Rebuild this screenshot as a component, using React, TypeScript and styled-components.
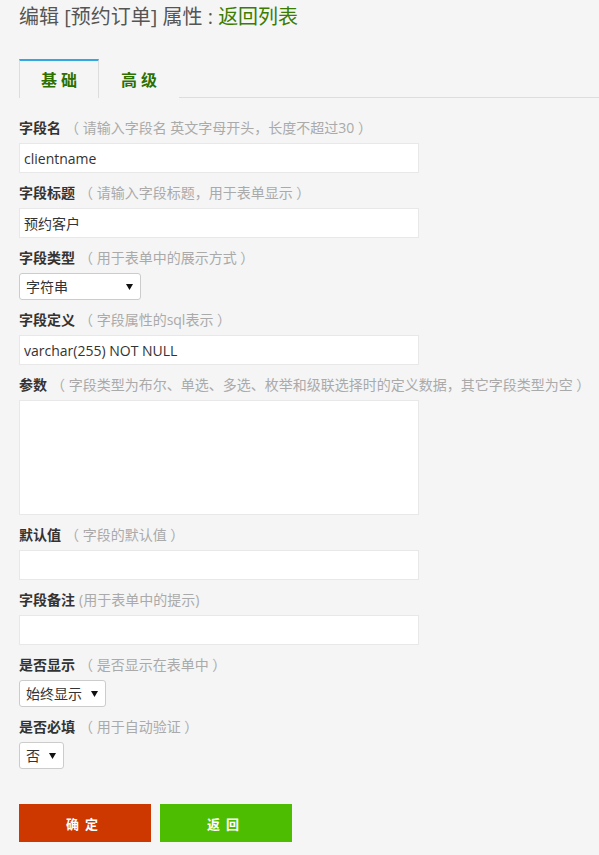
import React from 'react';
import styled, { createGlobalStyle } from 'styled-components';

const GlobalStyle = createGlobalStyle`
  body {
    margin: 0;
    background: #f5f5f5;
    font-family: "Open Sans", "Noto Sans CJK SC", sans-serif;
    color: #333;
  }
`;

const Page = styled.div`
  padding: 5px 19px 14px;
`;

const Title = styled.h1`
  margin: 0;
  font-size: 20px;
  line-height: 24px;
  font-weight: normal;
  color: #555;
`;

const TitleLink = styled.a`
  color: #3a7d00;
  text-decoration: none;
`;

const TabBar = styled.div`
  display: flex;
  margin-top: 30px;
  margin-right: -19px;
  border-bottom: 1px solid #ddd;
`;

const Tab = styled.div<{ $active?: boolean }>`
  height: 36px;
  padding: 0 17px 1px 21px;
  display: flex;
  align-items: center;
  font-size: 16px;
  font-weight: bold;
  letter-spacing: 4px;
  color: #2e7000;
  border-top: 2px solid ${(p) => (p.$active ? '#33a7df' : 'transparent')};
  border-left: 1px solid ${(p) => (p.$active ? '#ddd' : 'transparent')};
  border-right: 1px solid ${(p) => (p.$active ? '#ddd' : 'transparent')};
  background: #f5f5f5;
  margin-bottom: -1px;
`;

const Form = styled.div`
  padding-top: 20px;
`;

const Field = styled.div`
  margin-bottom: 10px;
`;

const LabelRow = styled.div`
  display: flex;
  align-items: baseline;
  height: 20px;
  line-height: 20px;
  margin-bottom: 5px;
  white-space: nowrap;
`;

const Label = styled.span`
  font-size: 14px;
  font-weight: bold;
  color: #333;
`;

const Hint = styled.span`
  font-size: 14px;
  color: #aaa;
  margin-left: 4px;
`;

const TextInput = styled.input`
  display: block;
  box-sizing: border-box;
  width: 400px;
  height: 30px;
  padding: 0 4px;
  border: 1px solid #e8e8e8;
  background: #fff;
  font-family: inherit;
  font-size: 14px;
  color: #333;
  outline: none;
`;

const TextArea = styled.textarea`
  display: block;
  box-sizing: border-box;
  width: 400px;
  height: 115px;
  margin-top: 1px;
  border: 1px solid #e8e8e8;
  background: #fff;
  resize: none;
  outline: none;
`;

const SelectWrap = styled.div<{ $width: number }>`
  position: relative;
  width: ${(p) => p.$width}px;
  height: 27px;
`;

const Select = styled.select`
  box-sizing: border-box;
  width: 100%;
  height: 100%;
  appearance: none;
  border: 1px solid #ccc;
  border-radius: 3px;
  background: #fff;
  padding: 0 6px;
  font-family: inherit;
  font-size: 14px;
  color: #333;
  outline: none;
`;

const Arrow = styled.svg`
  position: absolute;
  right: 8px;
  top: 11px;
  pointer-events: none;
`;

const Buttons = styled.div`
  display: flex;
  gap: 9px;
  margin-top: 35px;
`;

const Button = styled.button<{ $color: string }>`
  width: 132px;
  height: 38px;
  border: none;
  background: ${(p) => p.$color};
  color: #fff;
  font-family: inherit;
  font-size: 13px;
  font-weight: bold;
  letter-spacing: 6px;
  padding-left: 6px;
  cursor: pointer;
`;

const Dropdown: React.FC<{ width: number; value: string; options: string[] }> = ({
  width,
  value,
  options,
}) => (
  <SelectWrap $width={width}>
    <Select defaultValue={value}>
      {options.map((o) => (
        <option key={o}>{o}</option>
      ))}
    </Select>
    <Arrow width="7" height="6" viewBox="0 0 7 6">
      <polygon points="0,0 7,0 3.5,6" fill="#111" />
    </Arrow>
  </SelectWrap>
);

const App: React.FC = () => {
  return (
    <Page>
      <GlobalStyle />
      <Title>
        编辑 [预约订单] 属性 : <TitleLink href="#">返回列表</TitleLink>
      </Title>
      <TabBar>
        <Tab $active>基础</Tab>
        <Tab>高级</Tab>
      </TabBar>
      <Form>
        <Field>
          <LabelRow>
            <Label>字段名</Label>
            <Hint>（ 请输入字段名 英文字母开头，长度不超过30 ）</Hint>
          </LabelRow>
          <TextInput defaultValue="clientname" />
        </Field>
        <Field>
          <LabelRow>
            <Label>字段标题</Label>
            <Hint>（ 请输入字段标题，用于表单显示 ）</Hint>
          </LabelRow>
          <TextInput defaultValue="预约客户" />
        </Field>
        <Field>
          <LabelRow>
            <Label>字段类型</Label>
            <Hint>（ 用于表单中的展示方式 ）</Hint>
          </LabelRow>
          <Dropdown width={122} value="字符串" options={['字符串', '数字', '日期', '单选', '多选']} />
        </Field>
        <Field>
          <LabelRow>
            <Label>字段定义</Label>
            <Hint>（ 字段属性的sql表示 ）</Hint>
          </LabelRow>
          <TextInput defaultValue="varchar(255) NOT NULL" />
        </Field>
        <Field>
          <LabelRow>
            <Label>参数</Label>
            <Hint>（ 字段类型为布尔、单选、多选、枚举和级联选择时的定义数据，其它字段类型为空 ）</Hint>
          </LabelRow>
          <TextArea />
        </Field>
        <Field>
          <LabelRow>
            <Label>默认值</Label>
            <Hint>（ 字段的默认值 ）</Hint>
          </LabelRow>
          <TextInput />
        </Field>
        <Field>
          <LabelRow>
            <Label>字段备注</Label>
            <Hint>(用于表单中的提示)</Hint>
          </LabelRow>
          <TextInput />
        </Field>
        <Field>
          <LabelRow>
            <Label>是否显示</Label>
            <Hint>（ 是否显示在表单中 ）</Hint>
          </LabelRow>
          <Dropdown width={87} value="始终显示" options={['始终显示', '不显示']} />
        </Field>
        <Field>
          <LabelRow>
            <Label>是否必填</Label>
            <Hint>（ 用于自动验证 ）</Hint>
          </LabelRow>
          <Dropdown width={45} value="否" options={['否', '是']} />
        </Field>
        <Buttons>
          <Button $color="#cd3700">确定</Button>
          <Button $color="#4cbd00">返回</Button>
        </Buttons>
      </Form>
    </Page>
  );
};

export default App;
